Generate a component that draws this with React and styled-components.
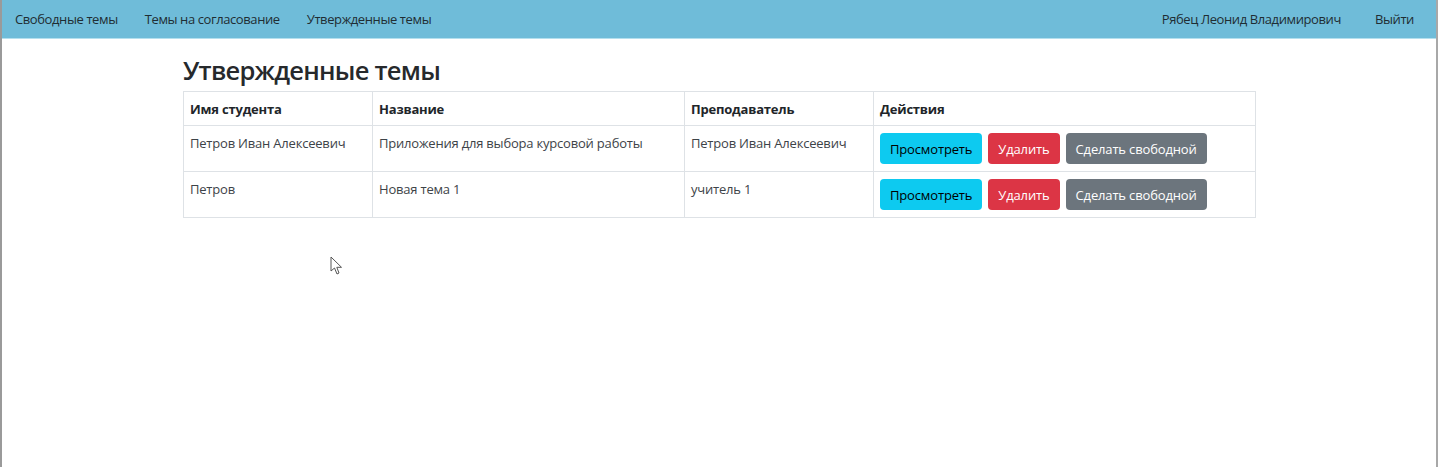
import React from 'react';
import styled, { createGlobalStyle } from 'styled-components';

const GlobalStyle = createGlobalStyle`
    html, body {
        margin: 0;
        padding: 0;
        background: #ffffff;
    }
    body {
        font-family: "Open Sans", "Noto Sans", sans-serif;
        color: #212529;
    }
`;

const topics = [
    {
        student: 'Петров Иван Алексеевич',
        title: 'Приложения для выбора курсовой работы',
        teacher: 'Петров Иван Алексеевич',
    },
    {
        student: 'Петров',
        title: 'Новая тема 1',
        teacher: 'учитель 1',
    },
];

function App() {
    return (
        <>
            <GlobalStyle />
            <Window>
                <NavBar>
                    <NavGroup>
                        <NavLink>Свободные темы</NavLink>
                        <NavLink>Темы на согласование</NavLink>
                        <NavLink>Утвержденные темы</NavLink>
                    </NavGroup>
                    <NavGroup>
                        <NavLink>Рябец Леонид Владимирович</NavLink>
                        <NavLink>Выйти</NavLink>
                    </NavGroup>
                </NavBar>
                <Content>
                    <Title>Утвержденные темы</Title>
                    <Table>
                        <colgroup>
                            <col style={{ width: 189 }} />
                            <col style={{ width: 312 }} />
                            <col style={{ width: 189 }} />
                            <col />
                        </colgroup>
                        <thead>
                            <tr>
                                <Th>Имя студента</Th>
                                <Th>Название</Th>
                                <Th>Преподаватель</Th>
                                <Th>Действия</Th>
                            </tr>
                        </thead>
                        <tbody>
                            {topics.map((t, i) => (
                                <tr key={i}>
                                    <Td>{t.student}</Td>
                                    <Td>{t.title}</Td>
                                    <Td>{t.teacher}</Td>
                                    <Td>
                                        <Actions>
                                            <Button variant="info">Просмотреть</Button>
                                            <Button variant="danger">Удалить</Button>
                                            <Button variant="secondary">Сделать свободной</Button>
                                        </Actions>
                                    </Td>
                                </tr>
                            ))}
                        </tbody>
                    </Table>
                </Content>
                <Cursor width="14" height="20" viewBox="0 0 14 20">
                    <path d="M1 1 L1 15 L4.5 12 L7 18 L9 17 L6.8 11.3 L11.5 11.3 Z" fill="#fff" stroke="#555" strokeWidth="1" strokeLinejoin="round" />
                </Cursor>
            </Window>
        </>
    );
}

export default App;

const Window = styled.div`
    position: relative;
    height: 467px;
    box-sizing: border-box;
    border-left: 2px solid #9a9a9a;
    border-right: 2px solid #a8a8a8;
    overflow: hidden;
`
const NavBar = styled.div`
    height: 38px;
    background: #6fbcd9;
    border-bottom: 1px solid #b4dfee;
    display: flex;
    align-items: center;
    justify-content: space-between;
    padding: 0 22px 0 13px;
`
const NavGroup = styled.div`
    display: flex;
    gap: 27px;
    &:last-child {
        gap: 34px;
    }
`
const NavLink = styled.a`
    font-size: 13px;
    color: #1f2d33;
    cursor: pointer;
    letter-spacing: -0.4px;
`
const Content = styled.div`
    width: 1073px;
    margin-left: 181px;
    padding-top: 14px;
`
const Title = styled.h2`
    margin: 0 0 4px 0;
    font-size: 25.5px;
    font-weight: 600;
    line-height: 34px;
    color: #26292c;
    letter-spacing: -0.75px;
`
const Table = styled.table`
    width: 100%;
    border-collapse: collapse;
    table-layout: fixed;
    font-size: 13px;
`
const Th = styled.th`
    text-align: left;
    font-weight: 700;
    padding: 0 6px;
    height: 33px;
    border: 1px solid #dee2e6;
    letter-spacing: -0.2px;
`
const Td = styled.td`
    vertical-align: top;
    padding: 7px 7px 7px 6px;
    height: 31px;
    border: 1px solid #dee2e6;
    color: #3d4348;
    letter-spacing: -0.2px;
    line-height: 20px;
`
const Actions = styled.div`
    display: flex;
    gap: 6px;
`
const colors = {
    info: { bg: '#0dcaf0', fg: '#000' },
    danger: { bg: '#dc3545', fg: '#fff' },
    secondary: { bg: '#6c757d', fg: '#fff' },
}
const Button = styled.button`
    height: 31px;
    padding: 0 10px;
    border: none;
    border-radius: 4px;
    font-family: inherit;
    font-size: 13px;
    letter-spacing: -0.15px;
    background: ${p => colors[p.variant].bg};
    color: ${p => colors[p.variant].fg};
    cursor: pointer;
`
const Cursor = styled.svg`
    position: absolute;
    left: 328px;
    top: 256px;
`
